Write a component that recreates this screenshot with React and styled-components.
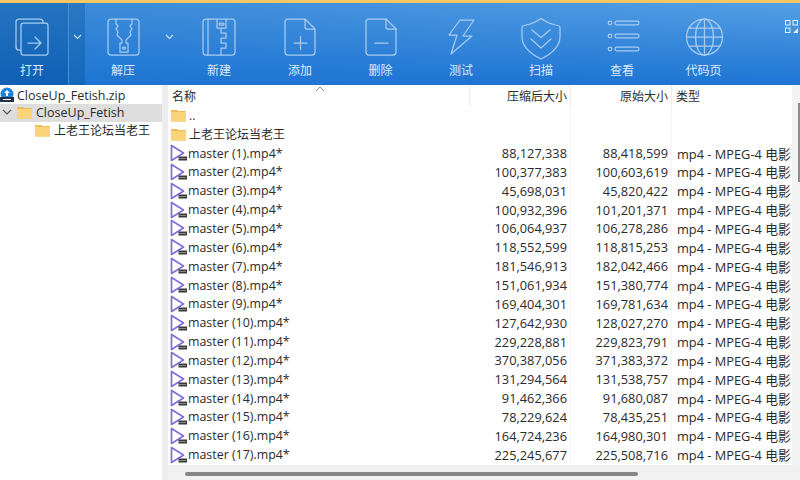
import React from "react";
import styled, { createGlobalStyle } from "styled-components";

const FONT = `"Open Sans", "Noto Sans CJK SC", sans-serif`;

const Global = createGlobalStyle`
  html, body { margin: 0; padding: 0; background: #fff; }
  #root { width: 800px; height: 480px; overflow: hidden; }
`;

const Window = styled.div`
  width: 800px;
  height: 480px;
  display: flex;
  flex-direction: column;
  overflow: hidden;
  font-family: ${FONT};
  color: #2b2b2b;
  border-top: 3px solid #f6c662;
  box-sizing: border-box;
`;
const Toolbar = styled.div`
  height: 82px;
  flex: none;
  display: flex;
  background: linear-gradient(180deg, rgba(29, 116, 210, 0) 0%, #1d74d2 100%),
    linear-gradient(90deg, #3a8ad8 0%, #549fe5 100%);
  color: #dcebfb;
`;
const ToolItem = styled.div`
  width: ${(p) => p.$w}px;
  flex: none;
  display: flex;
  flex-direction: column;
  align-items: center;
  padding: 13px ${(p) => (p.$dark ? 4 : 0)}px 0 0;
  box-sizing: border-box;
  background: ${(p) => (p.$dark ? "linear-gradient(180deg, #2474c0 0%, #0e60b6 100%)" : "none")};
`;
const ToolIcon = styled.svg`
  flex: none;
  overflow: visible;
  fill: none;
  stroke: #a8cbef;
  stroke-width: 1.25;
  stroke-linecap: round;
  stroke-linejoin: round;
`;
const ToolLabel = styled.div`
  font-size: 12px;
  line-height: 16px;
  margin-top: 7px;
`;
const Caret = styled.div`
  width: 17px;
  flex: none;
  display: flex;
  justify-content: center;
  padding-top: 31px;
  box-sizing: border-box;
  background: ${(p) => (p.$dark ? "linear-gradient(180deg, #2a78c2 0%, #1468bb 100%)" : "none")};
  border-left: ${(p) => (p.$dark ? "1px solid #4a8fd0" : "none")};
`;
const GridButton = styled.div`
  margin-left: auto;
  padding: 13px 2px 0 0;
`;
const Body = styled.div`
  flex: 1;
  display: flex;
  min-height: 0;
`;
const Tree = styled.div`
  width: 162px;
  flex: none;
  font-size: 12.5px;
`;
const TreeRow = styled.div`
  height: 17.5px;
  display: flex;
  align-items: center;
  padding-left: ${(p) => p.$indent}px;
  background: ${(p) => (p.$selected ? "#dedede" : "none")};
  white-space: nowrap;
  gap: 4px;
  &:first-child { margin-top: 1.5px; gap: 3px; }
`;
const TreeCjk = styled.span`
  font-size: 12px;
`;
const Splitter = styled.div`
  width: 6px;
  flex: none;
  background: #ededed;
`;
const Main = styled.div`
  flex: 1;
  min-width: 0;
  display: flex;
  flex-direction: column;
`;
const ListArea = styled.div`
  flex: 1;
  display: flex;
  min-height: 0;
`;
const List = styled.div`
  width: 624px;
  flex: none;
  font-size: 12.8px;
`;
const ColumnGrid = styled.div`
  display: grid;
  grid-template-columns: 302px 101px 101px 120px;
  height: ${(p) => p.$h}px;
  align-items: center;
  white-space: nowrap;
`;
const HeaderCell = styled.div`
  position: relative;
  height: 100%;
  display: flex;
  align-items: center;
  justify-content: ${(p) => (p.$right ? "flex-end" : "flex-start")};
  padding: 0 3px 0 4px;
  box-sizing: border-box;
  font-size: 12px;
  border-right: ${(p) => (p.$last ? "none" : "1px solid #ececec")};
`;
const SortArrow = styled.svg`
  position: absolute;
  left: 147px;
  top: 1px;
`;
const NameCell = styled.div`
  display: flex;
  align-items: center;
  height: 100%;
  padding-left: ${(p) => p.$pad}px;
  gap: ${(p) => p.$gap}px;
  font-size: ${(p) => p.$size}px;
  overflow: hidden;
`;
const NumCell = styled.div`
  height: 100%;
  display: flex;
  align-items: center;
  justify-content: flex-end;
  padding-right: 3px;
  border-right: 1px solid #f6f6f6;
  box-sizing: border-box;
`;
const TypeCell = styled.div`
  padding-left: 5px;
  overflow: hidden;
`;
const VScroll = styled.div`
  flex: 1;
  background: #f3f3f3;
  padding: 18px 0 0 6px;
`;
const VThumb = styled.div`
  height: 79px;
  background: #8b8b8b;
`;
const HScroll = styled.div`
  height: 15px;
  flex: none;
  background: #f1f1f1;
  padding: 7px 162px 0 17px;
  box-sizing: border-box;
`;
const HThumb = styled.div`
  height: 4px;
  background: #868686;
  border-radius: 2px;
`;

const Icon = ({ children }) => (
  <ToolIcon width="40" height="40" viewBox="0 0 40 40">
    {children}
  </ToolIcon>
);

const OpenIcon = () => (
  <Icon>
    <path d="M4 31V6q0-3 3-3h21q3 0 3 3v1" />
    <path d="M4 31q0 3 3 3h2" />
    <rect x="9" y="7" width="27" height="32" rx="2.5" />
    <path d="M16 27h13M23 21l6 6-6 6" />
  </Icon>
);
const ExtractIcon = () => (
  <Icon>
    <rect x="5" y="3" width="31" height="36" rx="3" />
    <path d="M13 3v5l2 2-2 3 2 3-1 3 5 5v3h-2v9h8v-9h-2v-3l5-5-1-3 2-3-2-3 2-2V3" />
    <rect x="19.5" y="31" width="3" height="2" rx="1" />
  </Icon>
);
const NewIcon = () => (
  <Icon>
    <rect x="4" y="3" width="32" height="36" rx="3" />
    <path d="M9 3v36" />
    <path d="M18 3v9h9V3" />
    <rect x="20" y="7" width="5" height="2" rx="1" />
    <path d="M22 12v5h5v5h-5v5h5v5h-5v7" />
  </Icon>
);
const DocIcon = ({ minus }) => (
  <Icon>
    <path d="M8 3h17l10 10v23q0 3-3 3H8q-3 0-3-3V6q0-3 3-3z" />
    <path d="M25 3v8q0 2 2 2h8" />
    {minus ? <path d="M14 27h13" /> : <path d="M14 27h13M20.5 20.5v13" />}
  </Icon>
);
const BoltIcon = () => (
  <Icon>
    <path d="M19 4h14L22 20h9L10 38l6-19H8z" />
  </Icon>
);
const ShieldIcon = () => (
  <Icon>
    <path d="M20 2.5c5 3.500 11 6 17 7q2 .4 2 2V21c0 10-9 17-19 22C10 38 1 31 1 21v-9.500q0-1.600 2-2c6-1 12-3.500 17-7z" />
    <path d="M11 14l9 7.500 9-7.500M10 23l10 9 10-9" />
  </Icon>
);
const ListIcon = () => (
  <Icon>
    <circle cx="8" cy="7" r="1.800" />
    <circle cx="8" cy="20" r="1.800" />
    <circle cx="8" cy="33" r="1.800" />
    <rect x="13" y="5.200" width="24" height="3.600" rx="1.800" />
    <rect x="13" y="18.200" width="24" height="3.600" rx="1.800" />
    <rect x="13" y="31.200" width="24" height="3.600" rx="1.800" />
  </Icon>
);
const GlobeIcon = () => (
  <Icon>
    <circle cx="20.500" cy="21" r="18" />
    <ellipse cx="20.500" cy="21" rx="9" ry="18" />
    <path d="M20.500 3v36M5 12h31M2.500 21h36M5 30h31" />
  </Icon>
);
const CaretIcon = () => (
  <svg width="9" height="6" viewBox="0 0 9 6" fill="none" stroke="#cfe3f8" strokeWidth="1.2">
    <path d="M1 1l3.500 3.500L8 1" />
  </svg>
);
const GridIcon = () => (
  <svg width="13" height="13" viewBox="0 0 13 13" fill="none" stroke="#e3f0fc" strokeWidth="1">
    <rect x="0.500" y="0.500" width="4.500" height="4.500" />
    <rect x="8" y="0.500" width="4.500" height="4.500" />
    <rect x="0.500" y="8" width="4.500" height="4.500" />
    <path d="M13 8v5H8z" fill="#e3f0fc" stroke="none" />
  </svg>
);
const Folder = () => (
  <svg width="15" height="13" viewBox="0 0 15 13" style={{ flex: "none" }}>
    <path d="M0 1h6l1.500 1H15v10.500H0z" fill="#eebd55" />
    <path d="M0 3h15v9.500H0z" fill="#fad478" />
  </svg>
);
const ZipIcon = () => (
  <svg width="14" height="16" viewBox="0 0 14 16" style={{ flex: "none" }}>
    <circle cx="7" cy="7" r="6.500" fill="#1b84d8" />
    <path d="M7 3l3 3H8v3H6V6H4z" fill="#fff" />
    <rect x="0" y="10" width="14" height="5" fill="#23344a" />
    <rect x="3" y="12" width="8" height="1" fill="#fff" />
  </svg>
);
const VideoIcon = () => (
  <svg width="18" height="18" viewBox="0 0 18 18" fill="none" style={{ flex: "none" }}>
    <path d="M1.500 1.500v15L13.500 9z" stroke="#7f6fd8" strokeWidth="1.700" strokeLinejoin="round" />
    <rect x="8.500" y="12.500" width="8.500" height="4" fill="#3a3a3a" />
    <path d="M9.500 14.500h6.500" stroke="#d5d5d5" strokeWidth="1" strokeDasharray="1 1" />
  </svg>
);
const ChevronDown = () => (
  <svg width="10" height="7" viewBox="0 0 10 7" fill="none" stroke="#555" strokeWidth="1.100" style={{ flex: "none", marginRight: 1 }}>
    <path d="M1 1l4 4 4-4" />
  </svg>
);

const tools = [
  { label: "解压", w: 76, icon: <ExtractIcon />, caret: true },
  { label: "新建", w: 82, icon: <NewIcon /> },
  { label: "添加", w: 80, icon: <DocIcon /> },
  { label: "删除", w: 81, icon: <DocIcon minus /> },
  { label: "测试", w: 80, icon: <BoltIcon /> },
  { label: "扫描", w: 80, icon: <ShieldIcon /> },
  { label: "查看", w: 82, icon: <ListIcon /> },
  { label: "代码页", w: 81, icon: <GlobeIcon /> },
];

const files = [
  ["88,127,338", "88,418,599"],
  ["100,377,383", "100,603,619"],
  ["45,698,031", "45,820,422"],
  ["100,932,396", "101,201,371"],
  ["106,064,937", "106,278,286"],
  ["118,552,599", "118,815,253"],
  ["181,546,913", "182,042,466"],
  ["151,061,934", "151,380,774"],
  ["169,404,301", "169,781,634"],
  ["127,642,930", "128,027,270"],
  ["229,228,881", "229,823,791"],
  ["370,387,056", "371,383,372"],
  ["131,294,564", "131,538,757"],
  ["91,462,366", "91,680,087"],
  ["78,229,624", "78,435,251"],
  ["164,724,236", "164,980,301"],
  ["225,245,677", "225,508,716"],
];

export default function App() {
  return (
    <Window>
      <Global />
      <Toolbar>
        <ToolItem $w={68} $dark>
          <OpenIcon />
          <ToolLabel>打开</ToolLabel>
        </ToolItem>
        <Caret $dark>
          <CaretIcon />
        </Caret>
        {tools.map((t) => (
          <React.Fragment key={t.label}>
            <ToolItem $w={t.w}>
              {t.icon}
              <ToolLabel>{t.label}</ToolLabel>
            </ToolItem>
            {t.caret && (
              <Caret>
                <CaretIcon />
              </Caret>
            )}
          </React.Fragment>
        ))}
        <GridButton>
          <GridIcon />
        </GridButton>
      </Toolbar>
      <Body>
        <Tree>
          <TreeRow $indent={0}>
            <ZipIcon />
            CloseUp_Fetish.zip
          </TreeRow>
          <TreeRow $indent={2} $selected>
            <ChevronDown />
            <Folder />
            CloseUp_Fetish
          </TreeRow>
          <TreeRow $indent={35}>
            <Folder />
            <TreeCjk>上老王论坛当老王</TreeCjk>
          </TreeRow>
        </Tree>
        <Splitter />
        <Main>
          <ListArea>
            <List>
              <ColumnGrid $h={21}>
                <HeaderCell>
                  名称
                  <SortArrow width="10" height="6" viewBox="0 0 10 6" fill="none" stroke="#888" strokeWidth="1">
                    <path d="M1 5l4-4 4 4" />
                  </SortArrow>
                </HeaderCell>
                <HeaderCell $right>压缩后大小</HeaderCell>
                <HeaderCell $right>原始大小</HeaderCell>
                <HeaderCell $last>类型</HeaderCell>
              </ColumnGrid>
              <ColumnGrid $h={18.85}>
                <NameCell $pad={3} $gap={3} $size={12}>
                  <Folder />
                  ..
                </NameCell>
                <NumCell />
                <NumCell />
                <TypeCell />
              </ColumnGrid>
              <ColumnGrid $h={18.85}>
                <NameCell $pad={3} $gap={3} $size={12}>
                  <Folder />
                  上老王论坛当老王
                </NameCell>
                <NumCell />
                <NumCell />
                <TypeCell />
              </ColumnGrid>
              {files.map(([packed, size], i) => (
                <ColumnGrid $h={18.85} key={i}>
                  <NameCell $pad={2} $gap={0} $size={12.4}>
                    <VideoIcon />
                    master ({i + 1}).mp4*
                  </NameCell>
                  <NumCell>{packed}</NumCell>
                  <NumCell>{size}</NumCell>
                  <TypeCell>mp4 - MPEG-4 电影</TypeCell>
                </ColumnGrid>
              ))}
            </List>
            <VScroll>
              <VThumb />
            </VScroll>
          </ListArea>
          <HScroll>
            <HThumb />
          </HScroll>
        </Main>
      </Body>
    </Window>
  );
}
